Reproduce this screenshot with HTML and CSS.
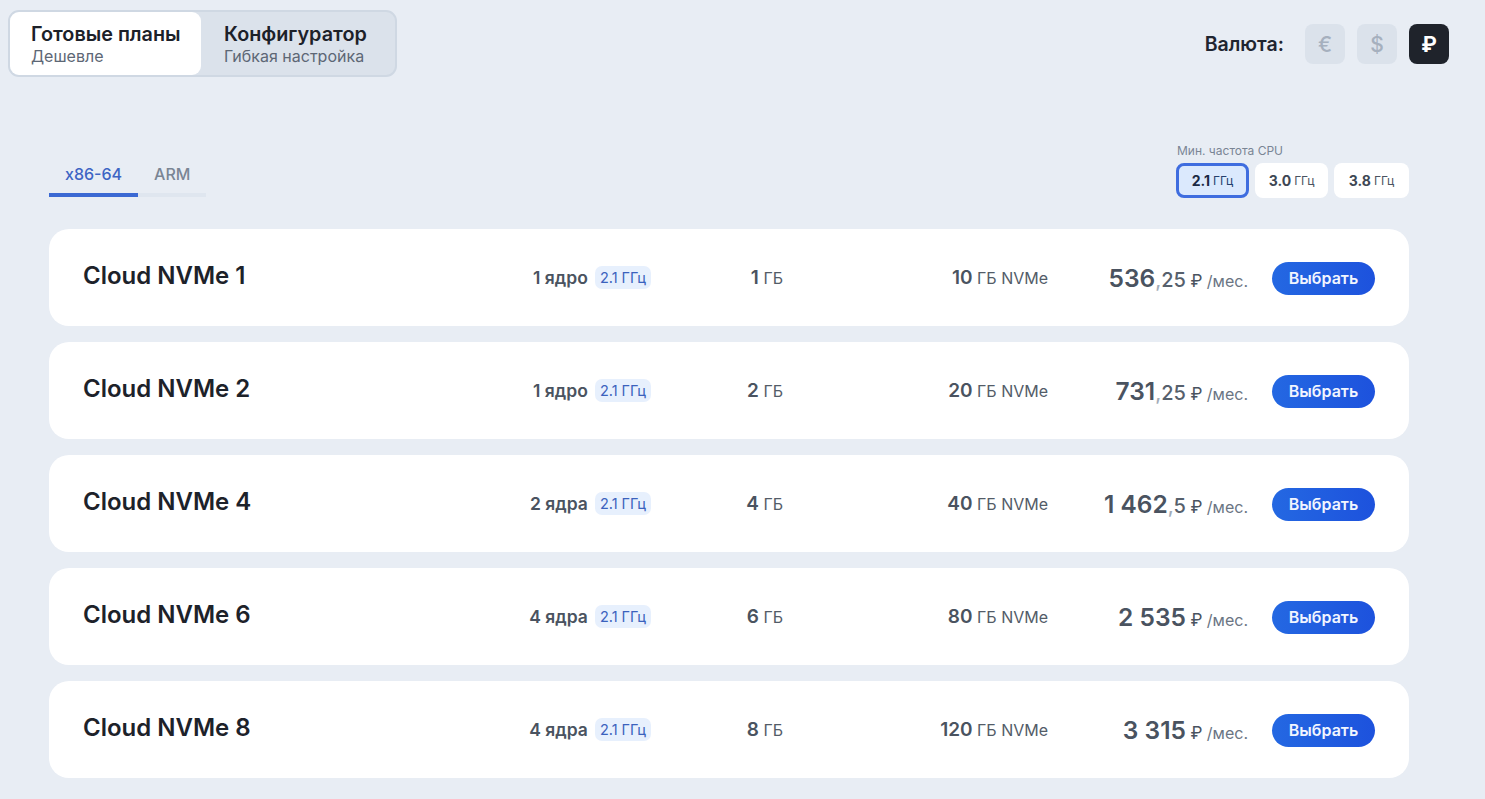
FILE: index.html
```html
<!DOCTYPE html>
<html lang="ru">
<head>
<meta charset="utf-8">
<link rel="stylesheet" href="styles.css">
</head>
<body>
<header class="topbar">
  <div class="segmented">
    <div class="seg seg-active">
      <div class="seg-title">Готовые планы</div>
      <div class="seg-sub">Дешевле</div>
    </div>
    <div class="seg">
      <div class="seg-title">Конфигуратор</div>
      <div class="seg-sub">Гибкая настройка</div>
    </div>
  </div>
  <div class="currency">
    <span class="currency-label">Валюта:</span>
    <button class="cur">€</button>
    <button class="cur">$</button>
    <button class="cur cur-active">₽</button>
  </div>
</header>

<main class="content">
  <div class="controls">
    <div class="arch-tabs">
      <div class="arch arch-active">x86-64</div>
      <div class="arch">ARM</div>
    </div>
    <div class="freq">
      <div class="freq-label">Мин. частота CPU</div>
      <div class="freq-btns">
        <button class="fbtn fbtn-active"><b>2.1</b> ГГц</button>
        <button class="fbtn"><b>3.0</b> ГГц</button>
        <button class="fbtn"><b>3.8</b> ГГц</button>
      </div>
    </div>
  </div>

  <div class="plans">
    <div class="plan">
      <div class="name">Cloud NVMe 1</div>
      <div class="cores"><b>1 ядро</b><span class="badge">2.1 ГГц</span></div>
      <div class="mem"><b>1</b> ГБ</div>
      <div class="disk"><b>10</b> ГБ NVMe</div>
      <div class="price"><span class="int">536</span><span class="frac"><span class="comma">,</span>25</span> <span class="rub">₽</span> <span class="per">/мес.</span></div>
      <button class="choose">Выбрать</button>
    </div>
    <div class="plan">
      <div class="name">Cloud NVMe 2</div>
      <div class="cores"><b>1 ядро</b><span class="badge">2.1 ГГц</span></div>
      <div class="mem"><b>2</b> ГБ</div>
      <div class="disk"><b>20</b> ГБ NVMe</div>
      <div class="price"><span class="int">731</span><span class="frac"><span class="comma">,</span>25</span> <span class="rub">₽</span> <span class="per">/мес.</span></div>
      <button class="choose">Выбрать</button>
    </div>
    <div class="plan">
      <div class="name">Cloud NVMe 4</div>
      <div class="cores"><b>2 ядра</b><span class="badge">2.1 ГГц</span></div>
      <div class="mem"><b>4</b> ГБ</div>
      <div class="disk"><b>40</b> ГБ NVMe</div>
      <div class="price"><span class="int">1 462</span><span class="frac"><span class="comma">,</span>5</span> <span class="rub">₽</span> <span class="per">/мес.</span></div>
      <button class="choose">Выбрать</button>
    </div>
    <div class="plan">
      <div class="name">Cloud NVMe 6</div>
      <div class="cores"><b>4 ядра</b><span class="badge">2.1 ГГц</span></div>
      <div class="mem"><b>6</b> ГБ</div>
      <div class="disk"><b>80</b> ГБ NVMe</div>
      <div class="price"><span class="int">2 535</span> <span class="rub">₽</span> <span class="per">/мес.</span></div>
      <button class="choose">Выбрать</button>
    </div>
    <div class="plan">
      <div class="name">Cloud NVMe 8</div>
      <div class="cores"><b>4 ядра</b><span class="badge">2.1 ГГц</span></div>
      <div class="mem"><b>8</b> ГБ</div>
      <div class="disk"><b>120</b> ГБ NVMe</div>
      <div class="price"><span class="int">3 315</span> <span class="rub">₽</span> <span class="per">/мес.</span></div>
      <button class="choose">Выбрать</button>
    </div>
  </div>
</main>
</body>
</html>
```

FILE: styles.css
```css
* { box-sizing: border-box; }
html, body { margin: 0; padding: 0; }
body {
  background: #e8edf4;
  font-family: Inter, "Noto Sans", sans-serif;
  color: #1f2530;
  width: 1485px;
  height: 799px;
  overflow: hidden;
}
button { font-family: inherit; border: none; cursor: pointer; }

.topbar {
  display: flex;
  justify-content: space-between;
  align-items: flex-start;
  padding: 10px 36px 0 8px;
}
.segmented {
  display: flex;
  border: 2px solid #cfd8e3;
  background: #dbe2eb;
  border-radius: 11px;
  height: 67px;
}
.seg {
  padding: 10px 6px 0 21px;
  border-radius: 9px;
  width: 194px;
  white-space: nowrap;
}
.seg + .seg { width: 194px; padding-left: 23px; }
.seg-active { background: #fff; width: 191px; }
.seg-title { font-size: 19.8px; font-weight: 600; color: #1c2129; line-height: 24px; }
.seg-sub { font-size: 16px; color: #5d6775; line-height: 20px; }

.currency { display: flex; align-items: center; gap: 12px; margin-top: 14px; }
.currency-label { font-size: 19.5px; font-weight: 600; color: #1f2530; margin-right: 9px; }
.cur {
  width: 40px; height: 40px; border-radius: 8px;
  background: #dbe2eb; color: #a6b0be;
  font-size: 21px; font-weight: 500;
  display: flex; align-items: center; justify-content: center;
}
.cur-active { background: #1f232b; color: #fff; font-weight: 700; }

.content { padding: 66px 76px 0 49px; }
.controls { display: flex; justify-content: space-between; align-items: flex-start; }
.arch-tabs { display: flex; margin-top: 22px; border-bottom: 4px solid #dfe6ef; }
.arch {
  font-size: 16px; font-weight: 500; color: #7a8594; line-height: 19px;
  padding: 0 16px 9px 16px; margin-bottom: -4px; border-bottom: 4px solid transparent;
}
.arch-active { color: #3d65c4; border-bottom-color: #3b69d3; }

.freq-label { font-size: 12px; color: #7a8594; margin: 0 0 5px 1px; line-height: 15px; }
.freq-btns { display: flex; gap: 6px; }
.fbtn {
  height: 35px; width: 73px; border-radius: 8px; background: #fff;
  font-size: 12px; color: #4a5360; border: 3px solid transparent;
  display: flex; align-items: center; justify-content: center; gap: 3px;
}
.fbtn b { font-size: 14px; font-weight: 700; color: #3e4753; }
.fbtn:last-child { width: 75px; }
.fbtn-active { background: #dbe9fd; border-color: #3f6ddf; color: #25406d; }
.fbtn-active b { color: #1b2a44; }

.plans { display: flex; flex-direction: column; gap: 16px; margin-top: 31px; }
.plan {
  background: #fff;
  border-radius: 20px;
  height: 97px;
  display: grid;
  grid-template-columns: 1fr 200px 132px 265px 200px 127px;
  align-items: center;
  padding: 0 34px;
}
.name { font-size: 24px; font-weight: 600; color: #1d222a; margin-top: -4px; }
.cores { display: flex; justify-content: flex-end; align-items: center; gap: 7px; }
.cores b { font-size: 17.5px; font-weight: 600; color: #4a5360; }
.badge {
  background: #e7f0fd; color: #3b62bd; font-size: 14.5px;
  padding: 2px 5px; border-radius: 7px; line-height: 19px;
}
.mem, .disk { text-align: right; font-size: 16px; color: #535c68; }
.mem b, .disk b { font-size: 19px; font-weight: 600; color: #4a5360; }
.price { text-align: right; color: #4a5360; white-space: nowrap; }
.price .int { font-size: 24.5px; font-weight: 600; }
.price .frac { font-size: 20px; font-weight: 500; color: #56606c; }
.price .comma { color: #a3acb8; }
.price .rub { font-size: 17px; color: #4a5360; }
.price .per { font-size: 16px; color: #6b7583; }
.choose {
  justify-self: end;
  width: 103px; height: 33px; border-radius: 17px;
  background: linear-gradient(90deg, #2468e2, #1d52dd);
  color: #f1f5ff; font-size: 16px; font-weight: 600;
  margin-top: 1px;
}
```
